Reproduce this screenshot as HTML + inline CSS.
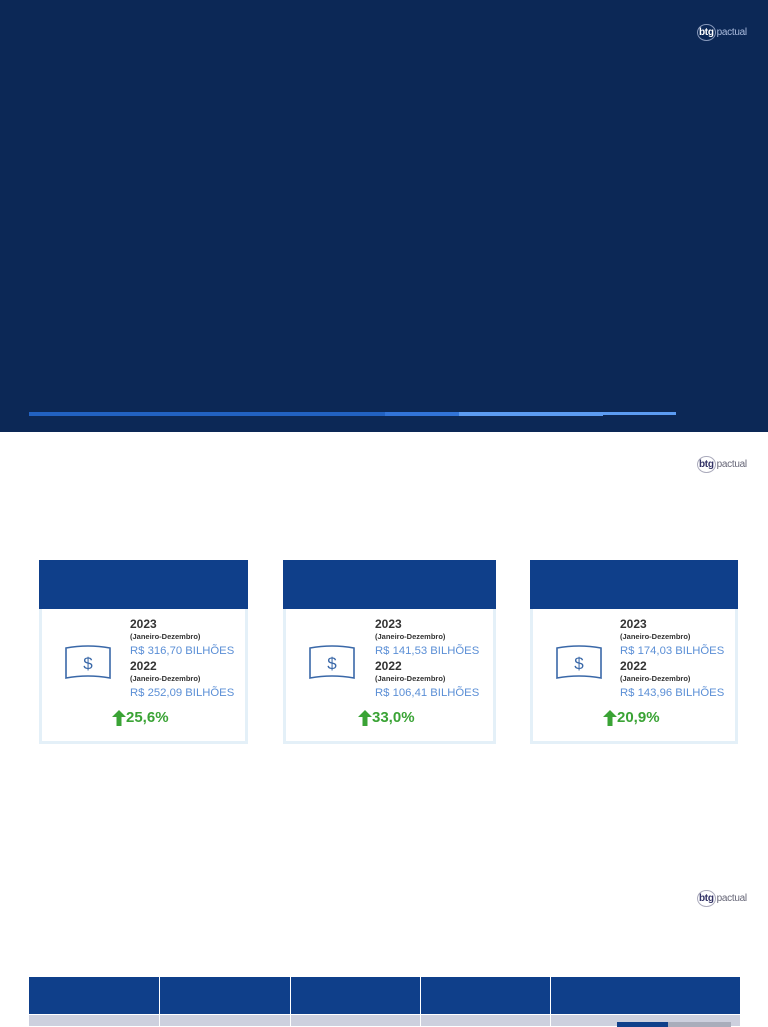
<!DOCTYPE html>
<html><head><meta charset="utf-8"><style>
*{margin:0;padding:0;box-sizing:border-box}
body{width:768px;height:1024px;overflow:hidden;background:#fff;font-family:"Liberation Sans",sans-serif;position:relative}
.a{position:absolute}
.logo{position:absolute;font-size:10px;letter-spacing:-0.3px}
.logo b{font-weight:bold;border:1px solid #aab;border-radius:50%;padding:2px 1px;margin-right:1px}
.card{position:absolute;top:560px;height:184px;border:3px solid #e4f0f8;border-top:none}
.card .h{height:49px;background:#0f3f8a;margin:0 -3px}
.t{position:absolute;left:88px;top:57px;font-size:11.3px;line-height:14px}
.y{font-weight:bold;color:#333;font-size:12px;line-height:14px}
.s{font-weight:bold;color:#333;font-size:7.5px;line-height:12px}
.v{color:#5b8fd6;line-height:16px}
.g{position:absolute;top:150px;color:#3aa335;font-weight:bold;font-size:15px;line-height:16px;display:flex;align-items:center}
.ic{position:absolute;left:22px;top:84px}
th{background:#0f3f8a;height:37px}
td{background:#cdd0de;height:12px}
</style></head><body>
<div class="a" style="left:0;top:0;width:768px;height:432px;background:#0c2856"></div>
<div class="logo" style="left:697px;top:27px;color:#fff"><b style="border-color:#8899bb">btg</b><span style="color:#aabbdd">pactual</span></div>
<div class="a" style="left:29px;top:412px;width:356px;height:4px;background:#2262c2"></div>
<div class="a" style="left:385px;top:412px;width:74px;height:4px;background:#3274d8"></div>
<div class="a" style="left:459px;top:412px;width:144px;height:4px;background:#5c9cf2"></div>
<div class="a" style="left:603px;top:412px;width:73px;height:3px;background:#5c9cf2"></div>
<div class="logo" style="left:697px;top:459px;color:#336"><b>btg</b><span style="color:#667">pactual</span></div>
<div class="logo" style="left:697px;top:893px;color:#336"><b>btg</b><span style="color:#667">pactual</span></div>

<div class="card" style="left:39px;width:209px"><div class="h"></div>
<svg class="ic" width="48" height="38" viewBox="0 0 48 38"><path d="M2 4Q24 0 46 4V34Q24 30 2 34Z" fill="none" stroke="#3a68a8" stroke-width="1.6"/><text x="24" y="25" font-size="17" fill="#3a68a8" text-anchor="middle" font-family="Liberation Sans">$</text></svg>
<div class="t"><div class="y">2023</div><div class="s">(Janeiro-Dezembro)</div><div class="v">R$ 316,70 BILHÕES</div><div class="y">2022</div><div class="s">(Janeiro-Dezembro)</div><div class="v">R$ 252,09 BILHÕES</div></div>
<div class="g" style="left:70px"><svg width="14" height="16" viewBox="0 0 14 16"><path d="M7 0L14 7H9.5V16H4.5V7H0Z" fill="#3aa335"/></svg>25,6%</div></div>

<div class="card" style="left:283px;width:213px"><div class="h"></div>
<svg class="ic" width="48" height="38" viewBox="0 0 48 38"><path d="M2 4Q24 0 46 4V34Q24 30 2 34Z" fill="none" stroke="#3a68a8" stroke-width="1.6"/><text x="24" y="25" font-size="17" fill="#3a68a8" text-anchor="middle" font-family="Liberation Sans">$</text></svg>
<div class="t" style="left:89px"><div class="y">2023</div><div class="s">(Janeiro-Dezembro)</div><div class="v">R$ 141,53 BILHÕES</div><div class="y">2022</div><div class="s">(Janeiro-Dezembro)</div><div class="v">R$ 106,41 BILHÕES</div></div>
<div class="g" style="left:72px"><svg width="14" height="16" viewBox="0 0 14 16"><path d="M7 0L14 7H9.5V16H4.5V7H0Z" fill="#3aa335"/></svg>33,0%</div></div>

<div class="card" style="left:530px;width:208px"><div class="h"></div>
<svg class="ic" width="48" height="38" viewBox="0 0 48 38"><path d="M2 4Q24 0 46 4V34Q24 30 2 34Z" fill="none" stroke="#3a68a8" stroke-width="1.6"/><text x="24" y="25" font-size="17" fill="#3a68a8" text-anchor="middle" font-family="Liberation Sans">$</text></svg>
<div class="t" style="left:87px"><div class="y">2023</div><div class="s">(Janeiro-Dezembro)</div><div class="v">R$ 174,03 BILHÕES</div><div class="y">2022</div><div class="s">(Janeiro-Dezembro)</div><div class="v">R$ 143,96 BILHÕES</div></div>
<div class="g" style="left:70px"><svg width="14" height="16" viewBox="0 0 14 16"><path d="M7 0L14 7H9.5V16H4.5V7H0Z" fill="#3aa335"/></svg>20,9%</div></div>

<table class="a" style="left:28px;top:977px;width:713px;border-collapse:separate;border-spacing:1px 0">
<tr><th style="width:130px"></th><th style="width:130px"></th><th style="width:129px"></th><th style="width:129px"></th><th></th></tr>
<tr><td style="border-top:1px solid #fff"></td><td style="border-top:1px solid #fff"></td><td style="border-top:1px solid #fff"></td><td style="border-top:1px solid #fff"></td><td style="border-top:1px solid #fff;position:relative"><div class="a" style="left:66px;top:7px;width:51px;height:5px;background:#0f3f8a"></div><div class="a" style="left:117px;top:7px;width:63px;height:5px;background:#a9adbb"></div></td></tr>
</table>
</body></html>
